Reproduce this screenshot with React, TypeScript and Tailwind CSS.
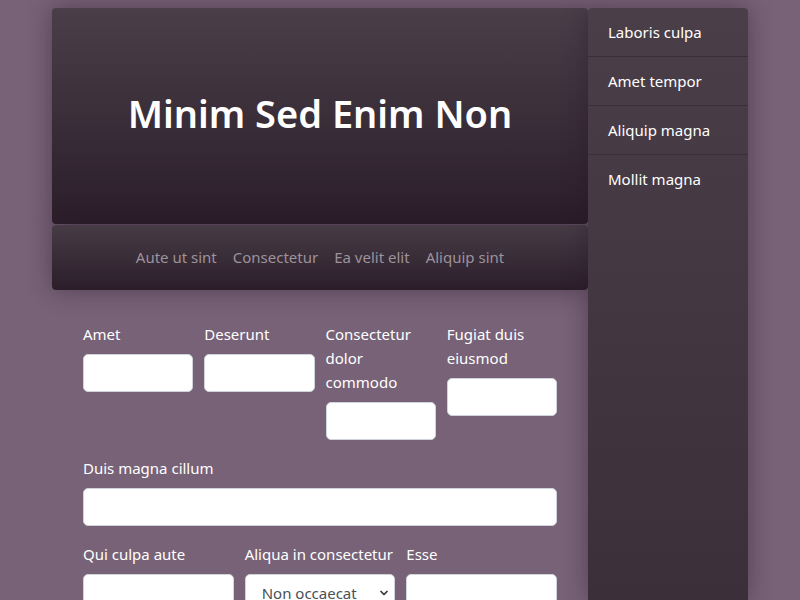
import { ChevronDown } from 'lucide-react';

const navLinks = ['Aute ut sint', 'Consectetur', 'Ea velit elit', 'Aliquip sint'];
const sideLinks = ['Laboris culpa', 'Amet tempor', 'Aliquip magna', 'Mollit magna'];
const topFields = ['Amet', 'Deserunt', 'Consectetur dolor commodo', 'Fugiat duis eiusmod'];

function Field({ label }: { label: string }) {
  return (
    <label className="flex flex-col">
      <span className="text-[15px] leading-6 text-white">{label}</span>
      <input
        type="text"
        className="mt-2 h-[38px] w-full rounded-[5px] border border-[#ced4da] bg-white px-3 text-base text-[#495057] outline-none"
      />
    </label>
  );
}

export default function App() {
  return (
    <div
      className="h-[600px] overflow-hidden bg-[#776277] pt-2"
      style={{ fontFamily: '"Noto Sans", "Open Sans", sans-serif' }}
    >
      <div className="mx-auto flex w-[696px] items-start">
        <main className="w-[536px] shrink-0">
          <header className="flex h-[216px] items-center justify-center rounded-[4px] bg-gradient-to-b from-[#4a3f49] to-[#2b1e2a] pb-[6px] shadow-[0_0_24px_rgba(40,20,40,0.45)]">
            <h1 className="text-[38px] font-semibold leading-none text-white">Minim Sed Enim Non</h1>
          </header>
          <nav className="mt-px flex h-[65px] items-center justify-center gap-4 rounded-[4px] bg-gradient-to-b from-[#473c46] to-[#2b1e2a] shadow-[0_0_24px_rgba(40,20,40,0.45)]">
            {navLinks.map((l) => (
              <a key={l} className="text-[15px] text-[#9d929c]">
                {l}
              </a>
            ))}
          </nav>

          <form className="px-[31px] pt-8">
            <div className="grid grid-cols-4 gap-x-[11px]">
              {topFields.map((f) => (
                <Field key={f} label={f} />
              ))}
            </div>
            <div className="mt-4">
              <Field label="Duis magna cillum" />
            </div>
            <div className="mt-4 grid grid-cols-3 gap-x-[11px]">
              <Field label="Qui culpa aute" />
              <label className="flex flex-col">
                <span className="text-[15px] leading-6 text-white">Aliqua in consectetur</span>
                <div className="relative mt-2">
                  <select className="h-[38px] w-full appearance-none rounded-[5px] border border-[#ced4da] bg-white pl-4 pr-8 text-[15px] text-[#495057] outline-none">
                    <option>Non occaecat</option>
                  </select>
                  <ChevronDown
                    size={12}
                    strokeWidth={3.5}
                    className="pointer-events-none absolute right-[5px] top-1/2 -translate-y-1/2 text-[#343a40]"
                  />
                </div>
              </label>
              <Field label="Esse" />
            </div>
          </form>
        </main>

        <aside className="min-h-[592px] w-[160px] shrink-0 rounded-t-[4px] bg-gradient-to-b from-[#4a3f49] to-[#3b2f3a] shadow-[0_0_24px_rgba(40,20,40,0.45)]">
          {sideLinks.map((l, i) => (
            <a
              key={l}
              className={`flex h-[49px] items-center px-5 text-[15px] text-white ${
                i < sideLinks.length - 1 ? 'border-b border-[#3a3039]' : ''
              }`}
            >
              {l}
            </a>
          ))}
        </aside>
      </div>
    </div>
  );
}
